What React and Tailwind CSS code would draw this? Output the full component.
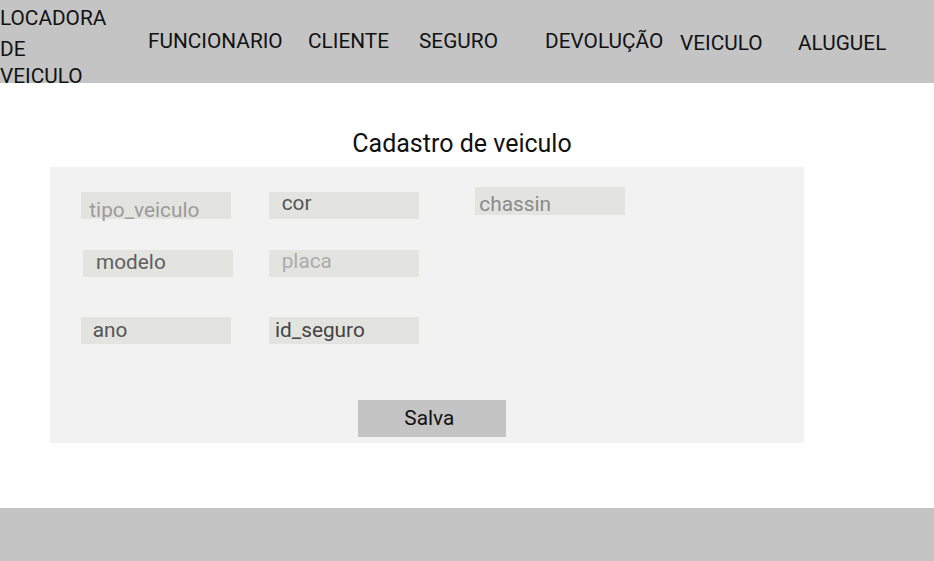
import React from "react";

function Field({ label, className, textClass }) {
  return (
    <div className={"w-[150px] shrink-0 bg-[#e3e3e0] text-[20.8px] leading-[24px] whitespace-nowrap " + className}>
      <div className={textClass}>{label}</div>
    </div>
  );
}

export default function App() {
  return (
    <div className="w-[934px] h-[561px] bg-white flex flex-col" style={{ fontFamily: "Roboto, 'Liberation Sans', sans-serif" }}>
      <header className="h-[83px] shrink-0 bg-[#c4c4c4] flex text-[20.8px] leading-[24px] text-[#111]">
        <div className="w-[148px] shrink-0 pt-[6px]">
          <div className="h-[31px]">LOCADORA</div>
          <div className="h-[26.5px]">DE</div>
          <div className="h-[19.5px] leading-[24px]">VEICULO</div>
        </div>
        <div className="w-[160px] shrink-0 pt-[28.6px]">FUNCIONARIO</div>
        <div className="w-[111px] shrink-0 pt-[28.6px]">CLIENTE</div>
        <div className="w-[126px] shrink-0 pt-[28.6px]">SEGURO</div>
        <div className="w-[135px] shrink-0 pt-[28.6px]">DEVOLUÇÃO</div>
        <div className="w-[118px] shrink-0 pt-[31px]">VEICULO</div>
        <div className="shrink-0 pt-[31px]">ALUGUEL</div>
      </header>

      <main className="flex-1 flex flex-col">
        <div className="mt-[45.7px] h-[30px] flex justify-center pr-[10px] text-[25px] leading-[30px] text-[#111]">
          Cadastro de veiculo
        </div>
        <div className="mt-[8.3px] ml-[50px] w-[754px] h-[276px] bg-[#f2f2f2] flex flex-col">
          <div className="flex items-start pt-[20px]">
            <Field label="tipo_veiculo" className="ml-[31px] mt-[5px] h-[27px] text-[#9b9b9b]" textClass="pt-[5.9px] pl-[8.3px]" />
            <Field label="cor" className="ml-[38px] mt-[5px] h-[27px] text-[#555]" textClass="pl-[12.7px] leading-[22px]" />
            <Field label="chassin" className="ml-[56px] h-[28px] text-[#8a8a8a]" textClass="pt-[4.6px] pl-[4.3px]" />
          </div>
          <div className="flex items-start mt-[31px]">
            <Field label="modelo" className="ml-[33px] h-[27px] text-[#5f5f5f]" textClass="pl-[13px]" />
            <Field label="placa" className="ml-[36px] h-[27px] text-[#acacac]" textClass="pl-[12.7px] leading-[22.4px]" />
          </div>
          <div className="flex items-start mt-[40px]">
            <Field label="ano" className="ml-[31px] h-[27px] text-[#555]" textClass="pt-[0.6px] pl-[11.7px]" />
            <Field label="id_seguro" className="ml-[38px] h-[27px] text-[#444]" textClass="pt-[0.6px] pl-[6px]" />
          </div>
          <div className="mt-[56px] ml-[308px] w-[148px] h-[37px] bg-[#c4c4c4] text-[20.8px] leading-[24px] text-[#111] pt-[5.9px] pl-[46.3px]">
            Salva
          </div>
        </div>
      </main>

      <footer className="h-[53px] shrink-0 bg-[#c4c4c4]" />
    </div>
  );
}
